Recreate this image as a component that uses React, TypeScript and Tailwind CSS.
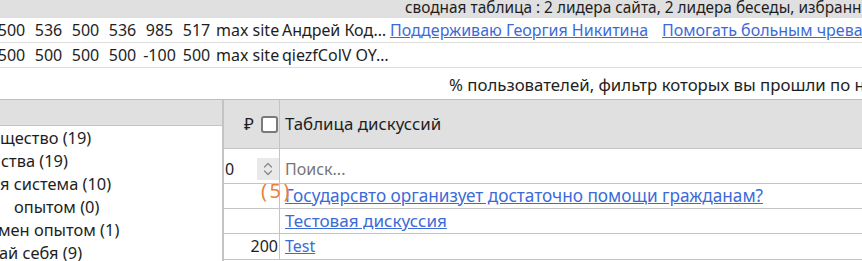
import React from "react";

function Spinner() {
  return (
    <div className="w-[22px] h-[22px] bg-[#e9e9e9] flex items-center justify-center">
      <svg width="22" height="22" viewBox="0 0 22 22" fill="none">
        <path d="M7.5 9 L11 5.5 L14.5 9" stroke="#8a8a8a" strokeWidth="1.3" strokeLinecap="round" strokeLinejoin="round" />
        <path d="M7.5 13 L11 16.5 L14.5 13" stroke="#8a8a8a" strokeWidth="1.3" strokeLinecap="round" strokeLinejoin="round" />
      </svg>
    </div>
  );
}

export default function App() {
  const nums1 = ["500", "536", "500", "536", "985", "517"];
  const nums2 = ["500", "500", "500", "500", "-100", "500"];
  const items: [string, string][] = [
    ["щество (19)", "pl-0"],
    ["ства (19)", "pl-[1px]"],
    ["я система (10)", "pl-0"],
    ["опытом (0)", "pl-[14px]"],
    ["мен опытом (1)", "-ml-[2px]"],
    ["ай себя (9)", "-ml-[1px]"],
  ];
  return (
    <div className="w-[862px] h-[261px] overflow-hidden bg-white text-[16px] text-[#1e1e1e] font-['Noto_Sans',sans-serif]">
      <div className="h-[18px] bg-[#e0e0e0] leading-[16px] text-[15.4px] pl-[405px] whitespace-nowrap overflow-hidden">
        сводная таблица : 2 лидера сайта, 2 лидера беседы, избранные дискуссии
      </div>

      <div className="overflow-hidden">
        <div className="flex h-[25px] border-b border-[#dedede] leading-[24px] whitespace-nowrap -ml-[7px]">
          {nums1.map((n, i) => (
            <div key={i} className="w-[37px] shrink-0 text-center">{n}</div>
          ))}
          <div className="w-[65px] shrink-0 pl-[1px]">max site</div>
          <div className="w-[110px] shrink-0 pl-[2px] truncate">Андрей Код…</div>
          <div className="w-[272px] shrink-0">
            <a className="text-[#3c6bd7] underline">Поддерживаю Георгия Никитина</a>
          </div>
          <div className="shrink-0">
            <a className="text-[#3c6bd7] underline">Помогать больным чревато последствиями</a>
          </div>
        </div>
        <div className="flex h-[25px] border-b border-[#dedede] leading-[24px] whitespace-nowrap -ml-[7px]">
          {nums2.map((n, i) => (
            <div key={i} className="w-[37px] shrink-0 text-center">{n}</div>
          ))}
          <div className="w-[65px] shrink-0 pl-[1px]">max site</div>
          <div className="w-[110px] shrink-0 pl-[2px] truncate">qiezfColV OY…</div>
        </div>
      </div>

      <div className="h-[31px] pt-[5px] pl-[449px] leading-[24px] text-[16.8px] whitespace-nowrap overflow-hidden">
        % пользователей, фильтр которых вы прошли по настройкам
      </div>

      <div className="flex border-t border-[#bdbdbd] h-[162px]">
        <div className="w-[224px] shrink-0 border-r-2 border-[#c4c4c4] overflow-hidden">
          <div className="h-[26px] bg-[#e0e0e0] border-b border-[#c4c4c4]" />
          <div className="leading-[23px] text-[16.4px] whitespace-nowrap">
            {items.map(([t, p], i) => (
              <div key={i} className={p}>{t}</div>
            ))}
          </div>
        </div>

        <div className="flex-1 min-w-0 overflow-hidden">
          <div className="flex h-[49px] bg-[#e0e0e0] border-b border-[#c4c4c4] leading-[24px]">
            <div className="w-[56px] shrink-0 border-r border-[#c4c4c4] flex items-center justify-end pr-[1px]">
              <span className="text-[17px]">₽</span>
              <span className="ml-[7px] w-[17px] h-[17px] border-2 border-[#7a7a7a] rounded-[3px] bg-white" />
            </div>
            <div className="flex items-center pl-[5px] text-[16.9px] whitespace-nowrap">Таблица дискуссий</div>
          </div>

          <div className="flex h-[35px] border-b border-[#c4c4c4] leading-[24px]">
            <div className="w-[56px] shrink-0 border-r border-[#c4c4c4] flex items-center justify-between pt-[5px] pl-[1px]">
              <span>0</span>
              <Spinner />
            </div>
            <div className="flex items-center pt-[5px] pl-[5px] text-[#767676] whitespace-nowrap">Поиск...</div>
          </div>

          <div className="flex h-[25px] border-b border-[#c4c4c4] leading-[24px]">
            <div className="relative w-[56px] shrink-0 border-r border-[#c4c4c4]">
              <span className="absolute left-[37px] top-[-5px] z-10 text-[20px] leading-[24px] text-[#e8833a] tracking-[2.5px] whitespace-nowrap">(5)</span>
            </div>
            <div className="pl-[5px] text-[17.2px] whitespace-nowrap">
              <a className="text-[#3c6bd7] underline">Государсвто организует достаточно помощи гражданам?</a>
            </div>
          </div>

          <div className="flex h-[25px] border-b border-[#c4c4c4] leading-[24px]">
            <div className="w-[56px] shrink-0 border-r border-[#c4c4c4]" />
            <div className="pl-[5px] text-[17.1px] whitespace-nowrap">
              <a className="text-[#3c6bd7] underline">Тестовая дискуссия</a>
            </div>
          </div>

          <div className="flex h-[26px] border-b border-[#c4c4c4] leading-[24px]">
            <div className="w-[56px] shrink-0 border-r border-[#c4c4c4] text-right pr-[1px]">200</div>
            <div className="pl-[5px] whitespace-nowrap">
              <a className="text-[#3c6bd7] underline">Test</a>
            </div>
          </div>
        </div>
      </div>
    </div>
  );
}
